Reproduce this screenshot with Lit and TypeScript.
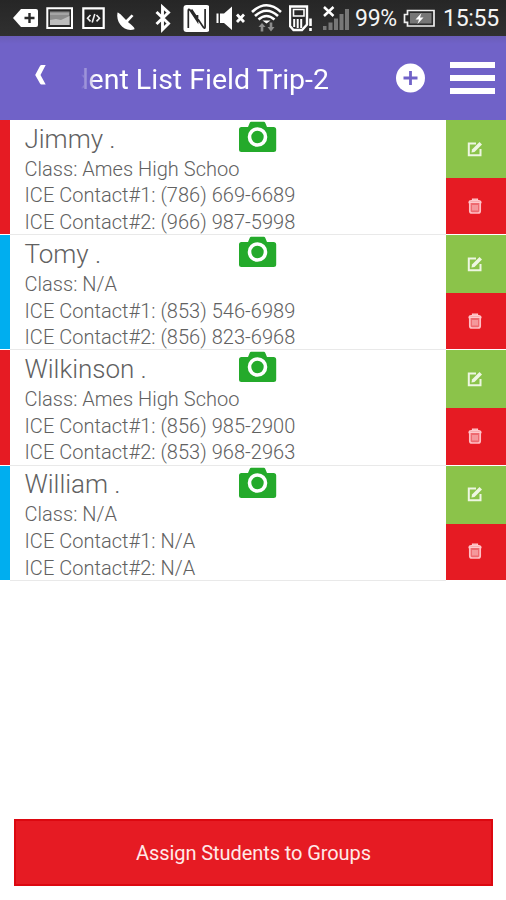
import { LitElement, html, css } from "lit";
import { customElement, property } from "lit/decorators.js";
import { classMap } from "lit/directives/class-map.js";

interface Student {
  name: string;
  className: string;
  contacts: string[];
  group: "red" | "blue";
}

const students: Student[] = [
  { name: "Jimmy .", className: "Ames High Schoo", contacts: ["(786) 669-6689", "(966) 987-5998"], group: "red" },
  { name: "Tomy .", className: "N/A", contacts: ["(853) 546-6989", "(856) 823-6968"], group: "blue" },
  { name: "Wilkinson .", className: "Ames High Schoo", contacts: ["(856) 985-2900", "(853) 968-2963"], group: "red" },
  { name: "William .", className: "N/A", contacts: ["N/A", "N/A"], group: "blue" },
];

@customElement("status-bar")
class StatusBar extends LitElement {
  static styles = css`
    :host { display: flex; height: 36px; background: linear-gradient(#262626, #303030); color: #f4f4f4; font-family: Roboto, sans-serif; }
    svg { display: block; flex: none; height: 36px; margin-right: 6px; }
    .tag { margin-left: 10px; }
    .percent, .clock { font-size: 23px; line-height: 38px; white-space: nowrap; flex: none; }
    .percent { width: 48px; letter-spacing: -0.3px; }
    .clock { letter-spacing: -0.3px; }
    .battery { margin-right: 7px; }
  `;
  render() {
    return html`
      <svg class="tag" width="30" viewBox="10 0 30 36"><path d="M13 18 21 9H36Q38 9 38 11V25Q38 27 36 27H21Z" fill="#fff"/><path d="M29.500 13V23M24.500 18H34.500" stroke="#292929" stroke-width="2.400"/></svg>
      <svg width="30" viewBox="46 0 30 36"><path d="M47.300 8.300H72V28H47.300Z" fill="#292929" stroke="#fff" stroke-width="2"/><path d="M50 11.500H69.500V25H50Z" fill="#8c8c8c"/><path d="M50 20 56 19 61 20 69.500 16V25H50Z" fill="#bdbdbd"/><path d="M50 14H69" stroke="#a4a4a4" stroke-width="2"/></svg>
      <svg width="27" viewBox="82 0 27 36"><path d="M83.300 8.300H103.700V28H83.300Z" fill="#222" stroke="#fff" stroke-width="2.200"/><path d="M90.500 15 87.500 18.200 90.500 21.400M96.500 15 99.500 18.200 96.500 21.400M94.800 14 92.200 22.500" fill="none" stroke="#eee" stroke-width="1.600"/></svg>
      <svg width="30" viewBox="114.500 0 30 36"><path d="M117 12.500C119 12.500 123.500 18 125.500 20L131 14.500 133 16 127.500 22C130 24.500 134.500 27 134 29.300C124 32.500 115 23 117 12.500Z" fill="#fff"/></svg>
      <svg width="24" viewBox="150.500 0 24 36"><path d="M156 12 168 23.500 162 29.500V7L168 12.500 156 24" fill="none" stroke="#fff" stroke-width="2.900"/></svg>
      <svg width="28" viewBox="180.500 0 28 36"><path d="M186 5H206Q209 5 209 8V29Q209 32 206 32H186Q183 32 183 29V8Q183 5 186 5Z" fill="#fff"/><path d="M187.800 28V10.500Q187.800 8.500 189.500 10L197 21.500V15M204.600 9V27Q204.600 29 203 27.500L191 9.500" fill="none" stroke="#282828" stroke-width="1.700"/></svg>
      <svg width="30" viewBox="214.500 0 30 36"><path d="M216 13.500H218V23H216ZM219.500 13.500H223.500L231.500 6.500V30L223.500 23H219.500Z" fill="#fff"/><path d="M236.500 14.500 243.500 22M243.500 14.500 236.500 22" stroke="#fff" stroke-width="2.800"/></svg>
      <svg width="32" viewBox="249.500 0 32 36"><g fill="none" stroke="#fff" stroke-width="2.600"><path d="M250.500 12Q265 -1.500 279.500 12"/><path d="M253.500 16Q265 5.500 276.500 16"/><path d="M257 19.500Q265 12.500 273 19.500"/></g><path d="M261 20.500H269L265 23.500Z" fill="#fff"/><path d="M257 27 260.500 23 264 27H261.800V31.500H259.200V27ZM266 27H268.200V22.500H270.800V27H273L269.500 31.500Z" fill="#8d8d8d"/></svg>
      <svg width="28" viewBox="288.500 0 28 36"><path d="M289.500 6.500H306.500V24.500L301.500 30H293L289.500 26Z" fill="#292929" stroke="#fff" stroke-width="2.400"/><path d="M293 9.500H303.500V16H293Z" fill="none" stroke="#fff" stroke-width="1.600"/><path d="M293.700 19V27M297.200 19V28M300.700 19V28" stroke="#fff" stroke-width="2"/><path d="M310 18.500V26M310 28V31" stroke="#fff" stroke-width="2.600"/></svg>
      <svg width="26" viewBox="322.500 0 26 36"><path d="M322 26H326V30H322ZM328 22.500H332V30H328ZM333.500 18.500H337.500V30H333.500ZM339 14H343V30H339ZM344.500 9H348.500V30H344.500Z" fill="#777"/><path d="M323.500 7 333 16M333 7 323.500 16" stroke="#fff" stroke-width="2.500"/></svg>
      <span class="percent">99%</span>
      <svg class="battery" width="33" viewBox="403 0 33 36"><path d="M407.500 10.500H434V26H407.500V22.300H404.500V14.500H407.500Z" fill="none" stroke="#f0f0f0" stroke-width="1.700"/><path d="M410 13H431.500V23.500H410Z" fill="#777"/><path d="M421.500 13 415.500 19.500H419L417.500 24 423.500 17.500H420Z" fill="#fff"/></svg>
      <span class="clock">15:55</span>`;
  }
}

@customElement("title-bar")
class TitleBar extends LitElement {
  static styles = css`
    :host { display: flex; align-items: flex-start; height: 84px; background: linear-gradient(#6a5db8, #7062c8 8px, #7062c8); color: #fff; font-family: Roboto, sans-serif; }
    svg { display: block; flex: none; }
    .back { margin: 28px 35px 0 34px; }
    .title { display: flex; justify-content: flex-end; width: 248px; margin-top: 27px; overflow: hidden; font-size: 28.500px; line-height: 34px; white-space: nowrap;
      -webkit-mask-image: linear-gradient(90deg, transparent, #000 14px); mask-image: linear-gradient(90deg, transparent, #000 14px); }
    .add { margin: 27px 0 0 67px; }
    .menu { display: flex; flex-direction: column; gap: 7px; width: 45px; margin: 26px 0 0 24px; }
    .bar { height: 6px; background: #fff; }
  `;
  render() {
    return html`
      <svg class="back" width="12" height="22" viewBox="0 0 12 22"><path d="M7.500 1H11.700L6.500 11 11.700 20.500H7.500Q6.500 20.500 6 19.500L1.200 11 6 2Q6.500 1 7.500 1Z" fill="#fff"/></svg>
      <div class="title">Student List Field Trip-2</div>
      <svg class="add" width="30" height="30" viewBox="0 0 30 30"><circle cx="14.500" cy="15" r="14.500" fill="#fff"/><path d="M14.500 8V22M7.500 15H21.500" stroke="#7062c8" stroke-width="2.800"/></svg>
      <div class="menu"><div class="bar"></div><div class="bar"></div><div class="bar"></div></div>`;
  }
}

@customElement("student-row")
class StudentRow extends LitElement {
  @property({ attribute: false }) student!: Student;
  static styles = css`
    :host { display: grid; grid-template-columns: 10px 14.500px 213.500px 1fr 60px; grid-template-rows: 115.200px; height: 115.200px; color: #616161; font-family: Roboto, sans-serif; font-weight: 300; }
    .stripe { margin-bottom: 1px; }
    .red { background: #e61b23; }
    .blue { background: #00aeef; }
    .content { display: grid; grid-template-columns: subgrid; grid-template-rows: 100%; grid-column: 2 / 5; box-sizing: border-box; border-bottom: 1px solid #e9e9e9; }
    .info { grid-column: 2; white-space: nowrap; }
    .name { font-size: 26px; line-height: 32px; height: 35.700px; padding-top: 2.500px; box-sizing: border-box; letter-spacing: -0.02px; }
    .line { font-size: 20px; line-height: 26.700px; height: 26.700px; letter-spacing: 0.03px; }
    .photo { grid-column: 3; padding-top: 1px; }
    .actions { grid-column: 5; display: grid; grid-template-rows: 58px 1fr; margin-bottom: 1px; }
    .action { display: flex; align-items: center; justify-content: center; padding: 0 3px 1px 0; }
    .edit { background: #8bc34a; }
    .remove { background: #e61b23; }
    svg { display: block; }
  `;
  render() {
    const s = this.student;
    return html`
      <div class=${classMap({ stripe: true, red: s.group === "red", blue: s.group === "blue" })}></div>
      <div class="content">
        <div class="info">
          <div class="name">${s.name}</div>
          <div class="line">Class: ${s.className}</div>
          ${s.contacts.map((c, i) => html`<div class="line">ICE Contact#${i + 1}: ${c}</div>`)}
        </div>
        <div class="photo">
          <svg width="39" height="32" viewBox="0 0 39 32"><path d="M3.500 6H10L11.800 1.700Q12.200 .8 13.200 .8H25.800Q26.800 .8 27.200 1.700L29 6H35.500Q38.200 6 38.200 8.500V28.500Q38.200 31 35.500 31H3.500Q1 31 1 28.500V8.500Q1 6 3.500 6Z" fill="#24aa2b"/><circle cx="19.500" cy="16" r="8" fill="none" stroke="#fff" stroke-width="3.600"/></svg>
        </div>
      </div>
      <div class="actions">
        <div class="action edit">
          <svg width="16" height="16" viewBox="0 0 16 16"><path d="M9 2.500H1.800V14.200H13.500V8" fill="none" stroke="#eef6e2" stroke-width="2"/><path d="M5 8.500 12.500 1 15 3.500 7.500 11 4.500 11.500Z" fill="#eef6e2"/></svg>
        </div>
        <div class="action remove">
          <svg width="14" height="16" viewBox="0 0 14 16"><path d="M1 4.700Q1 2.500 3.500 2.500H10.500Q13 2.500 13 4.700ZM4.500 2.500V1.200H9.500V2.500" fill="#f8aeb1" stroke="#ffc9cc" stroke-width="1.200"/><path d="M1.800 5V13Q1.800 15 4 15H10Q12.200 15 12.200 13V5" fill="#ee6a70" stroke="#ffc0c4" stroke-width="1.700"/><path d="M5 7V12.500M7 7V12.500M9 7V12.500" stroke="#fbc5c7" stroke-width="1"/></svg>
        </div>
      </div>`;
  }
}

@customElement("app-root")
class AppRoot extends LitElement {
  static styles = css`
    :host { display: flex; flex-direction: column; width: 506px; height: 900px; overflow: hidden; background: #fff; }
    .assign { margin: auto 13px 14px 14px; height: 67px; box-sizing: border-box; border: 2px solid #dc0810; border-radius: 0; background: #e61b23; color: #ffe9e8; font: 400 20px/1 Roboto, sans-serif; letter-spacing: -0.08px; padding: 1px 0 0; }
  `;
  render() {
    return html`
      <status-bar></status-bar>
      <title-bar></title-bar>
      <div>${students.map((s) => html`<student-row .student=${s}></student-row>`)}</div>
      <button class="assign">Assign Students to Groups</button>`;
  }
}
